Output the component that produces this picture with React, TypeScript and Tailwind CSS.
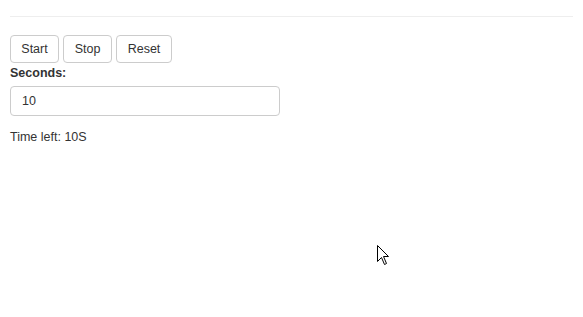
const buttons = [
  { label: "Start", width: "w-[49px]" },
  { label: "Stop", width: "w-[49px]" },
  { label: "Reset", width: "w-[56px]" },
];

export default function App() {
  return (
    <div className="relative min-h-[317px] w-full bg-white px-[10px] font-['Liberation_Sans',Arial,sans-serif] text-[12.5px] leading-[18px] text-[#333]">
      <div className="h-[16px]" />
      <hr className="border-0 border-t border-[#eee]" />

      <div className="mt-[18px] flex gap-[4px]">
        {buttons.map((b) => (
          <button
            key={b.label}
            className={`h-[28px] ${b.width} rounded-[4px] border border-[#ccc] bg-white text-center text-[12.5px] leading-[18px] text-[#333]`}
          >
            {b.label}
          </button>
        ))}
      </div>

      <label className="mt-[1px] block font-bold">Seconds:</label>
      <input
        type="text"
        defaultValue="10"
        className="mt-[4px] block h-[30px] w-[270px] rounded-[4px] border border-[#ccc] px-[11px] text-[12.5px] text-[#333] outline-none"
      />

      <p className="mt-[12px]">Time left: 10S</p>

      {/* mouse pointer captured in the screenshot */}
      <svg
        className="absolute left-[377px] top-[245px]"
        width="13"
        height="21"
        viewBox="0 0 13 21"
      >
        <path
          d="M0.5 0.5 L0.5 16.5 L4.5 12.5 L7.5 19.5 L9.5 18.5 L6.5 11.5 L11.5 11.5 Z"
          fill="#fff"
          stroke="#000"
          strokeWidth="1"
          strokeLinejoin="miter"
        />
      </svg>
    </div>
  );
}
